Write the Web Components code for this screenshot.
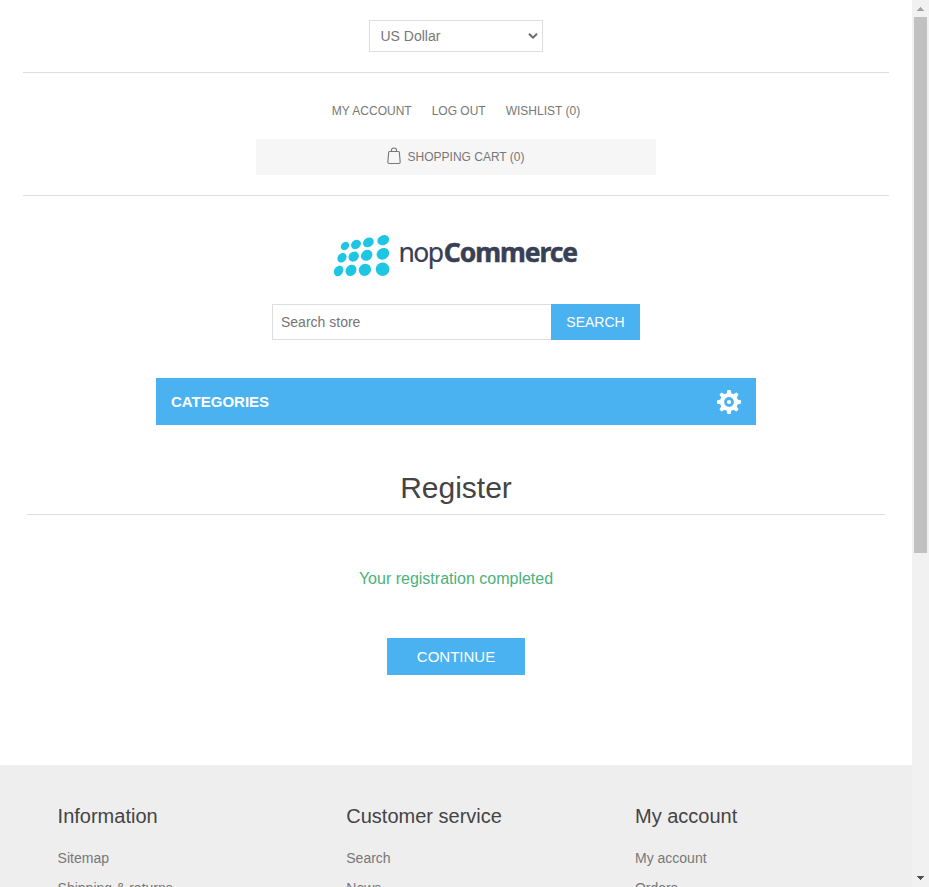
<!DOCTYPE html>
<html lang="en">
<head>
<meta charset="utf-8">
<title>nopCommerce - Register</title>
<style>
html, body { margin: 0; height: 100%; overflow: hidden; background: #fff; }
body { font: 14px "Liberation Sans", Arial, sans-serif; color: #777; }
</style>
</head>
<body>
<store-page></store-page>
<script>
const define = (name, html) => {
  const t = document.createElement('template');
  t.innerHTML = '<style>*{box-sizing:border-box}</style>' + html;
  customElements.define(name, class extends HTMLElement {
    constructor() {
      super();
      this.attachShadow({ mode: 'open' }).appendChild(t.content.cloneNode(true));
    }
  });
};

define('currency-select', `
<style>
:host { display: flex; align-items: center; justify-content: space-between; box-sizing: border-box; width: 174px; height: 32px; border: 1px solid #ddd; padding: 0 4px 0 10.5px; line-height: 16px; }
svg { display: block; }
</style>
<span><slot></slot></span>
<svg width="10" height="8" viewBox="0 0 10 8"><path d="M1 1.7 5 5.6 9 1.7" fill="none" stroke="#6b6b6b" stroke-width="2"/></svg>`);

define('header-links', `
<style>
:host { display: flex; justify-content: center; gap: 20px; font-size: 12px; line-height: 14px; text-transform: uppercase; }
</style><slot></slot>`);

define('cart-link', `
<style>
:host { display: flex; box-sizing: border-box; justify-content: center; align-items: center; width: 400px; height: 36px; background: #f6f6f6; font-size: 12px; line-height: 14px; gap: 7px; text-transform: uppercase; }
svg { display: block; margin: -2px 0 0 -1px; }
</style>
<svg width="14" height="18" viewBox="0 0 14 18" fill="none" stroke="#777"><path d="M2.700 4.500h8.600q.9 0 1 .8l.9 9.600q0 1.600-1.500 1.600H2.300q-1.500 0-1.500-1.600l.9-9.600q.1-.8 1-.8Z" stroke-width="1.100"/><path d="M4.500 4.500V3.200Q4.500 1 7 1t2.500 2.200v1.300" stroke-width="1.100"/></svg>
<span><slot></slot></span>`);

define('store-logo', `
<style>
:host { display: block; width: 250px; height: 50px; }
svg { display: block; overflow: visible; }
text { font-family: "Noto Sans", "Open Sans", sans-serif; fill: #374054; stroke: #374054; }
</style>
<svg width="250" height="50" viewBox="331 230 250 50">
<g fill="#1fc6e3">
<ellipse cx="345" cy="246" rx="4.600" ry="3.800" transform="rotate(-42 345 246)"/>
<ellipse cx="356" cy="244.400" rx="5.300" ry="4.400" transform="rotate(-38 356 244.400)"/>
<ellipse cx="368.400" cy="242.400" rx="5.700" ry="4.600" transform="rotate(-32 368.400 242.400)"/>
<ellipse cx="383.300" cy="240.200" rx="6.100" ry="4.900" transform="rotate(-22 383.300 240.200)"/>
<ellipse cx="342" cy="257.700" rx="5.200" ry="4.200" transform="rotate(-50 342 257.700)"/>
<ellipse cx="353.700" cy="256.600" rx="5.500" ry="4.700" transform="rotate(-42 353.700 256.600)"/>
<ellipse cx="366.700" cy="255.300" rx="6" ry="5.200" transform="rotate(-38 366.700 255.300)"/>
<ellipse cx="382.900" cy="253.800" rx="6.500" ry="5.600" transform="rotate(-30 382.900 253.800)"/>
<ellipse cx="338.600" cy="270.900" rx="5.600" ry="4.400" transform="rotate(-58 338.600 270.900)"/>
<ellipse cx="351" cy="270.400" rx="6" ry="5.100" transform="rotate(-50 351 270.400)"/>
<ellipse cx="364.900" cy="269.800" rx="6.400" ry="5.900" transform="rotate(-45 364.900 269.800)"/>
<circle cx="382.600" cy="269.300" r="6.800"/>
</g>
<text x="398.500" y="262.300" font-size="26.500" textLength="45.500" stroke-width=".2">nop</text>
<text x="443.700" y="262.300" font-size="26.500" textLength="134.500" font-weight="700" stroke-width=".5">Commerce</text>
</svg>`);

define('search-box', `
<style>
:host { display: flex; width: 368px; height: 36px; }
.field { flex: 1; border: 1px solid #ddd; border-right: 0; padding: 0 8px; line-height: 34px; color: #757575; }
.button { width: 89px; background: #4ab2f1; color: #fff; text-align: center; line-height: 36px; text-transform: uppercase; }
</style>
<div class="field">Search store</div><div class="button">Search</div>`);

define('menu-toggle', `
<style>
:host { display: flex; box-sizing: border-box; align-items: center; justify-content: space-between; width: 600px; height: 47px; padding: 0 15px; background: #4ab2f1; color: #fff; font-size: 15px; font-weight: 700; text-transform: uppercase; }
svg { display: block; margin-top: 1px; }
</style>
<span><slot></slot></span>
<svg width="24" height="24" viewBox="-12 -12 24 24" fill="#fff">
<path fill-rule="evenodd" d="M0-9A9 9 0 1 0 0 9 9 9 0 1 0 0-9ZM0-4.900A4.900 4.900 0 1 1 0 4.900 4.900 4.900 0 1 1 0-4.900Z"/>
<g id="t"><path d="M-1.500-12h3l1.200 4.500h-5.400ZM-1.500 12h3l1.200-4.500h-5.400ZM-12-1.500v3l4.500 1.200v-5.400ZM12-1.500v3l-4.500 1.200v-5.400Z"/></g>
<use href="#t" transform="rotate(45)"/><circle r="2.100"/>
</svg>`);

define('page-title', `
<style>
:host { display: block; box-sizing: border-box; width: 858px; height: 50px; border-bottom: 1px solid #ddd; text-align: center; color: #444; font-size: 30px; line-height: 45px; }
</style><slot></slot>`);

define('action-button', `
<style>
:host { display: block; width: 138px; height: 37px; line-height: 37px; background: #4ab2f1; color: #fff; font-size: 15px; text-align: center; text-transform: uppercase; }
</style><slot></slot>`);

define('footer-block', `
<style>
:host { display: block; }
.title { color: #444; font-size: 20px; line-height: 23px; margin-bottom: 22px; }
.links { display: grid; gap: 14px; line-height: 16px; }
</style>
<div class="title"><slot name="title"></slot></div><div class="links"><slot></slot></div>`);

define('page-scrollbar', `
<style>
:host { display: flex; flex-direction: column; align-items: center; justify-content: space-between; width: 17px; height: 887px; background: #f1f1f1; }
.cap { height: 17px; flex: none; }
.thumb { width: 13px; height: 536px; background: #c1c1c1; margin-bottom: auto; }
svg { display: block; }
</style>
<svg class="cap" width="17" height="17" shape-rendering="crispEdges"><path d="M8 7h1v1h1v1h1v1h1v1H5v-1h1V9h1V8h1Z" fill="#a3a3a3"/></svg>
<div class="thumb"></div>
<svg class="cap" width="17" height="17" shape-rendering="crispEdges"><path d="M5 6h7v1h-1v1h-1v1H9v1H8V9H7V8H6V7H5Z" fill="#505050"/></svg>`);

define('store-page', `
<style>
:host { display: flex; width: 929px; height: 887px; overflow: hidden; }
main { width: 912px; flex: none; display: flex; flex-direction: column; align-items: center; }
.top, .user { width: 866px; flex: none; border-bottom: 1px solid #ddd; display: flex; flex-direction: column; align-items: center; }
.top { height: 73px; padding-top: 20px; }
.user { height: 123px; padding-top: 31px; gap: 21px; }
store-logo { margin-top: 34px; }
search-box { margin-top: 24px; }
menu-toggle { margin-top: 38px; }
page-title { margin-top: 40px; }
.result { color: #4cb17c; font-size: 16px; line-height: 18px; margin-top: 55px; }
action-button { margin-top: 50px; }
footer { width: 912px; height: 122px; flex: none; overflow: hidden; margin-top: 90px; padding: 40px 0 0 57.600px; background: #eee; display: grid; grid-template-columns: 288.700px 288.700px 1fr; }
</style>
<main>
<div class="top"><currency-select>US Dollar</currency-select></div>
<div class="user">
<header-links><span>My account</span><span>Log out</span><span>Wishlist (0)</span></header-links>
<cart-link>Shopping cart (0)</cart-link>
</div>
<store-logo></store-logo>
<search-box></search-box>
<menu-toggle>Categories</menu-toggle>
<page-title>Register</page-title>
<div class="result">Your registration completed</div>
<action-button>Continue</action-button>
<footer>
<footer-block><span slot="title">Information</span><span>Sitemap</span><span>Shipping &amp; returns</span></footer-block>
<footer-block><span slot="title">Customer service</span><span>Search</span><span>News</span></footer-block>
<footer-block><span slot="title">My account</span><span>My account</span><span>Orders</span></footer-block>
</footer>
</main>
<page-scrollbar></page-scrollbar>`);
</script>
</body>
</html>
